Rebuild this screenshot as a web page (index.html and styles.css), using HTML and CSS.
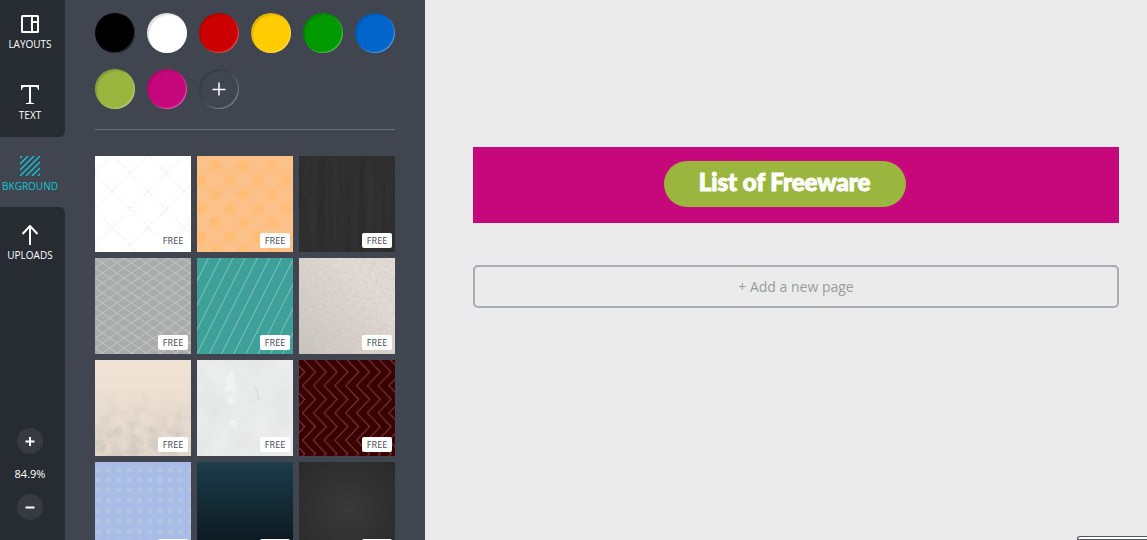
FILE: index.html
```html
<!DOCTYPE html>
<html lang="en">
<head>
<meta charset="utf-8">
<title>Banner editor</title>
<link rel="stylesheet" href="styles.css">
</head>
<body>
<div class="editor">
  <nav class="sidebar" aria-label="Tools">
    <div class="nav-group nav-group-top">
      <button class="nav-item nav-item-first" type="button">
        <svg class="nav-icon" viewBox="0 0 20 20" fill="none" stroke="#fff" stroke-width="2"><rect x="2" y="2" width="16" height="16" rx=".5"/><path d="M12 2v16M12 8h6"/></svg>
        <span>LAYOUTS</span>
      </button>
      <button class="nav-item" type="button">
        <svg class="nav-icon" viewBox="0 0 20 20" fill="#fff"><path d="M1 0h18v5h-1c0-2-.8-3-2.500-3H11v15c0 .7.600 1 3 1v1H6v-1c2.400 0 3-.3 3-1V2H4.500C2.800 2 2 3 2 5H1z"/></svg>
        <span>TEXT</span>
      </button>
    </div>
    <button class="nav-item nav-item-active" type="button">
      <svg class="nav-icon" viewBox="0 0 20 20" fill="none" stroke="#12c8d3" stroke-width="1.400"><path d="M0 2l2-2M0 8l8-8M0 14l14-14M0 20L20 0M6 20L20 6M12 20l8-8M18 20l2-2"/></svg>
      <span>BKGROUND</span>
    </button>
    <div class="nav-group nav-group-bottom">
      <button class="nav-item" type="button">
        <svg class="nav-icon" viewBox="0 0 20 20" fill="none" stroke="#fff" stroke-width="2"><path d="M10 20V1M2.500 9L10 1l7.500 8"/></svg>
        <span>UPLOADS</span>
      </button>
      <div class="zoom">
        <button class="zoom-btn" type="button" aria-label="Zoom in"><svg viewBox="0 0 26 26"><path d="M13 9v9M8.500 13.500h9"/></svg></button>
        <output class="zoom-value">84.9%</output>
        <button class="zoom-btn" type="button" aria-label="Zoom out"><svg viewBox="0 0 26 26"><path d="M8.500 13.500h9"/></svg></button>
      </div>
    </div>
  </nav>

  <aside class="panel">
    <div class="swatches">
      <button class="swatch black" type="button" aria-label="Black"></button>
      <button class="swatch white" type="button" aria-label="White"></button>
      <button class="swatch red" type="button" aria-label="Red"></button>
      <button class="swatch yellow" type="button" aria-label="Yellow"></button>
      <button class="swatch green" type="button" aria-label="Green"></button>
      <button class="swatch blue" type="button" aria-label="Blue"></button>
      <button class="swatch olive" type="button" aria-label="Olive"></button>
      <button class="swatch magenta" type="button" aria-label="Magenta"></button>
      <button class="swatch add" type="button" aria-label="Add a colour"><svg viewBox="0 0 40 40"><path d="M20 13.500v13M13.500 20.500h13"/></svg></button>
    </div>
    <div class="tiles">
      <button class="tile" type="button">
        <svg viewBox="0 0 96 96"><defs><pattern id="diamond" width="36" height="36" patternUnits="userSpaceOnUse"><path d="M-2 18L18-2M14 38L38 14M16-2L38 20M-2 16L20 38" fill="none" stroke="#e4e4e4" stroke-width="1" stroke-dasharray="1.500 1.500"/></pattern></defs><rect width="96" height="96" fill="#fff"/><rect width="96" height="96" fill="url(#diamond)"/></svg>
        <span class="badge">FREE</span>
      </button>
      <button class="tile" type="button">
        <svg viewBox="0 0 96 96"><defs><pattern id="dots" width="28.400" height="28.400" patternUnits="userSpaceOnUse"><g fill="#ffbd78"><circle cx="18.200" cy="9.800" r="6"/><circle cx="4" cy="24" r="6"/><circle cx="32.400" cy="24" r="6"/><circle cx="4" cy="-4.400" r="6"/></g></pattern></defs><rect width="96" height="96" fill="#fcc189"/><rect width="96" height="96" fill="url(#dots)"/></svg>
        <span class="badge">FREE</span>
      </button>
      <button class="tile" type="button">
        <svg viewBox="0 0 96 96"><defs><filter id="wood" x="0" y="0" width="100%" height="100%"><feTurbulence type="fractalNoise" baseFrequency=".15 .01" numOctaves="3" seed="4"/><feColorMatrix values="0 0 0 0 0  0 0 0 0 0  0 0 0 0 0  .25 0 0 0 -.04"/></filter></defs><rect width="96" height="96" fill="#323332"/><rect width="96" height="96" filter="url(#wood)"/></svg>
        <span class="badge">FREE</span>
      </button>
      <button class="tile" type="button">
        <svg viewBox="0 0 96 96"><defs><pattern id="lattice" width="14.600" height="10" patternUnits="userSpaceOnUse"><path d="M0 0L14.600 10M14.600 0L0 10" stroke="#c3c3c3"/></pattern></defs><rect width="96" height="96" fill="#a9acab"/><rect width="96" height="96" fill="url(#lattice)"/></svg>
        <span class="badge">FREE</span>
      </button>
      <button class="tile" type="button">
        <svg viewBox="0 0 96 96"><rect width="96" height="96" fill="#3ea199"/><path d="M11.500 0l-50 100M23.700 0l-50 100M35.900 0l-50 100M48.100 0l-50 100M60.300 0l-50 100M72.500 0l-50 100M84.700 0l-50 100M96.900 0l-50 100M109.100 0l-50 100M121.300 0l-50 100M133.500 0l-50 100M145.700 0l-50 100" stroke="#83c3bc"/></svg>
        <span class="badge">FREE</span>
      </button>
      <button class="tile" type="button">
        <svg viewBox="0 0 96 96"><defs><linearGradient id="sand" x1="1" y1="0" x2="0" y2="1"><stop offset=".3" stop-color="#e2dad4"/><stop offset="1" stop-color="#c9c5be"/></linearGradient><filter id="grain" x="0" y="0" width="100%" height="100%"><feTurbulence type="fractalNoise" baseFrequency=".3" numOctaves="4" seed="8"/><feColorMatrix values="0 0 0 0 .4  0 0 0 0 .38  0 0 0 0 .35  .4 0 0 0 -.15"/></filter></defs><rect width="96" height="96" fill="url(#sand)"/><rect width="96" height="96" filter="url(#grain)"/></svg>
        <span class="badge">FREE</span>
      </button>
      <button class="tile" type="button">
        <svg viewBox="0 0 96 96"><defs><linearGradient id="cream" x1="0" y1="0" x2="0" y2="1"><stop offset="0" stop-color="#f1e4d7"/><stop offset="1" stop-color="#e2d7ca"/></linearGradient><linearGradient id="fade" x1="0" y1="0" x2="0" y2="1"><stop offset=".3" stop-color="#000"/><stop offset="1" stop-color="#fff"/></linearGradient><mask id="lower"><rect width="96" height="96" fill="url(#fade)"/></mask><filter id="stain" x="0" y="0" width="100%" height="100%"><feTurbulence type="fractalNoise" baseFrequency=".09" numOctaves="5" seed="12"/><feColorMatrix values="0 0 0 0 .5  0 0 0 0 .47  0 0 0 0 .43  1.4 0 0 0 -.5"/></filter></defs><rect width="96" height="96" fill="url(#cream)"/><g mask="url(#lower)"><rect width="96" height="96" filter="url(#stain)"/></g></svg>
        <span class="badge">FREE</span>
      </button>
      <button class="tile" type="button">
        <svg viewBox="0 0 96 96"><defs><filter id="plaster" x="0" y="0" width="100%" height="100%"><feTurbulence type="fractalNoise" baseFrequency=".04 .03" numOctaves="4" seed="3"/><feColorMatrix values="0 0 0 0 .55  0 0 0 0 .57  0 0 0 0 .58  .35 0 0 0 -.13"/></filter></defs><rect width="96" height="96" fill="#ebecec"/><rect width="96" height="96" filter="url(#plaster)"/><path d="M34 8l-2 8-4 2 2 7-2 5 10 2 2-6-4-3 1-6zM33 35l-3 5 3 5 7-3zM34 58l-3 6 8 4 2-5z" fill="#f7f7f7" opacity=".6"/><path d="M57 27l3 4 2 9" fill="none" stroke="#d3d6d7"/></svg>
        <span class="badge">FREE</span>
      </button>
      <button class="tile" type="button">
        <svg viewBox="0 0 96 96"><defs><pattern id="zigzag" width="10.800" height="27.300" patternUnits="userSpaceOnUse"><path d="M3.500-1.700L16.500 12 3.500 25.600 16.500 39.300M-7.300-1.700L5.700 12-7.300 25.600 5.700 39.300M-18.100-1.700L-5.100 12-18.100 25.600" fill="none" stroke="#80403c"/></pattern></defs><rect width="96" height="96" fill="#3b0002"/><rect width="96" height="96" fill="url(#zigzag)"/></svg>
        <span class="badge">FREE</span>
      </button>
      <button class="tile" type="button">
        <svg viewBox="0 0 96 96"><defs><pattern id="spots" width="10.300" height="10.300" patternUnits="userSpaceOnUse"><circle cx="3.300" cy="7.700" r="2.500" fill="#b4c5e2"/></pattern></defs><rect width="96" height="96" fill="#a9bce5"/><rect width="96" height="96" fill="url(#spots)"/></svg>
        <span class="badge">FREE</span>
      </button>
      <button class="tile" type="button">
        <svg viewBox="0 0 96 96"><defs><linearGradient id="deep" x1="0" y1="0" x2="0" y2="1"><stop offset="0" stop-color="#1c3d4a"/><stop offset=".8" stop-color="#0d1b22"/><stop offset="1" stop-color="#0a141a"/></linearGradient></defs><rect width="96" height="96" fill="url(#deep)"/></svg>
        <span class="badge">FREE</span>
      </button>
      <button class="tile" type="button">
        <svg viewBox="0 0 96 96"><defs><radialGradient id="coal" r=".7"><stop offset="0" stop-color="#393939"/><stop offset="1" stop-color="#2a2a2a"/></radialGradient></defs><rect width="96" height="96" fill="url(#coal)"/></svg>
        <span class="badge">FREE</span>
      </button>
    </div>
  </aside>

  <main class="canvas">
    <section class="banner"><h1 class="pill">List of Freeware</h1></section>
    <button class="add-page" type="button">+ Add a new page</button>
  </main>
  <div class="status"></div>
</div>
</body>
</html>
```
FILE: styles.css
```css
* { box-sizing: border-box; }

body {
  margin: 0;
  font-family: "Open Sans", "Noto Sans", sans-serif;
}

button {
  padding: 0;
  border: 0;
  background: none;
  color: inherit;
  font-family: inherit;
}

svg { display: block; }

.editor {
  position: relative;
  display: flex;
  height: 100vh;
  overflow: hidden;
  background: #ebebeb;
}

.sidebar {
  flex: 0 0 65px;
  display: flex;
  flex-direction: column;
  background: #404550;
  color: #fff;
}

.nav-group { background: #272b32; }
.nav-group-top { border-bottom-right-radius: 6px; }

.nav-group-bottom {
  flex: 1;
  display: flex;
  flex-direction: column;
  border-top-right-radius: 6px;
}

.nav-item {
  display: flex;
  flex-direction: column;
  align-items: center;
  gap: 2px;
  width: 60px;
  height: 70px;
  padding-top: 18px;
  font-size: 10px;
  font-weight: 500;
  line-height: 16px;
}

.nav-item-first {
  height: 67px;
  padding-top: 14px;
}

.nav-item-active {
  padding-top: 19px;
  color: #12c8d3;
  font-weight: 400;
}

.nav-icon {
  width: 20px;
  height: 20px;
}

.zoom {
  display: flex;
  flex-direction: column;
  align-items: center;
  gap: 12px;
  width: 60px;
  margin-top: auto;
  padding-bottom: 20px;
}

.zoom-btn {
  width: 26px;
  height: 26px;
  border-radius: 50%;
  background: #373b41;
}

.zoom-btn path {
  fill: none;
  stroke: #fff;
  stroke-width: 2;
}

.zoom-value {
  font-size: 11px;
  font-weight: 500;
  line-height: 16px;
}

.panel {
  flex: 0 0 360px;
  padding: 13px 30px 0;
  background: #404550;
}

.swatches {
  display: grid;
  grid-template-columns: repeat(6, 40px);
  justify-content: space-between;
  row-gap: 16px;
  padding-bottom: 20px;
  border-bottom: 1px solid #6a6e77;
}

.swatch {
  height: 40px;
  border-radius: 50%;
  box-shadow: inset 2px 2px 1px rgba(0, 0, 0, 0.12), inset -1px -1px 1px rgba(255, 255, 255, 0.3);
}

.black { background: #000; box-shadow: inset -1px -1px 0 #2b2f36; }
.white { background: #fff; }
.red { background: #c00; }
.yellow { background: #fc0; }
.green { background: #090; }
.blue { background: #06c; }
.olive { background: #9bb63f; }
.magenta { background: #c7087c; }

.add path {
  fill: none;
  stroke: #fff;
  stroke-width: 1.5;
}

.tiles {
  display: grid;
  grid-template-columns: repeat(3, 1fr);
  gap: 6px;
  margin-top: 26px;
}

.tile {
  position: relative;
  aspect-ratio: 1;
}

.tile svg {
  width: 100%;
  height: 100%;
}

.badge {
  position: absolute;
  right: 3px;
  bottom: 4px;
  width: 30px;
  border-radius: 2px;
  background: #fff;
  color: #4a4f55;
  font-family: "Noto Sans", "Open Sans", sans-serif;
  font-size: 9px;
  line-height: 15px;
  text-align: center;
}

.canvas {
  flex: 1;
  padding: 147px 28px 0 48px;
}

.banner {
  padding: 14px 0 16px 29.5%;
  background: #c7087c;
}

.pill {
  width: 242px;
  margin: 0;
  padding-bottom: 4px;
  border-radius: 23px;
  background: #9bb63f;
  color: #fff;
  font-family: Lato, sans-serif;
  font-size: 24px;
  font-weight: 900;
  line-height: 42px;
  text-align: center;
  -webkit-text-stroke: 1px #fff;
}

.add-page {
  width: 100%;
  height: 43px;
  margin-top: 42px;
  border: 2px solid #a9acaf;
  border-radius: 5px;
  color: #999b9d;
  font-size: 14px;
}

.status {
  position: absolute;
  right: 0;
  bottom: 0;
  width: 70px;
  height: 4px;
  border: solid #50555c;
  border-width: 1px 0 1px 1px;
  border-top-left-radius: 3px;
  background: #fff;
}
```
